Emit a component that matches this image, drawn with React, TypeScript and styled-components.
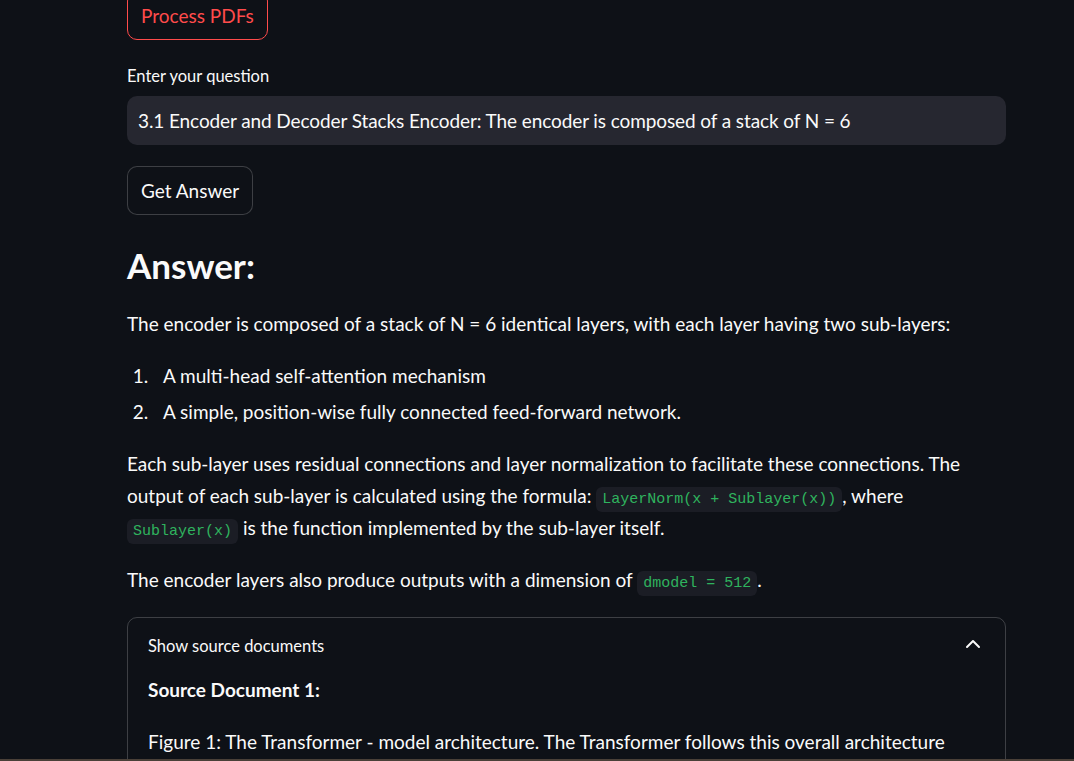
import styled, { createGlobalStyle } from 'styled-components';

const GlobalStyle = createGlobalStyle`
  html, body {
    margin: 0;
    padding: 0;
    background: #0e1117;
    overflow: hidden;
  }
  body {
    font-family: Lato, "Noto Sans", sans-serif;
    color: #fafafa;
  }
`;

const Page = styled.div`
  width: 100vw;
  height: 100vh;
  background: #0e1117;
  overflow: hidden;
`;

const Main = styled.div`
  width: 879px;
  margin-left: 127px;
  margin-top: -9px;
  display: flex;
  flex-direction: column;
`;

const Button = styled.button<{ $active?: boolean; $top?: number }>`
  align-self: flex-start;
  height: 49px;
  margin-top: ${(p) => p.$top ?? 0}px;
  padding: 0 13px;
  border-radius: 10px;
  background: #0e1117;
  font-family: inherit;
  font-size: 19px;
  border: 1px solid ${(p) => (p.$active ? 'rgb(255, 75, 75)' : 'rgba(250, 250, 250, 0.2)')};
  color: ${(p) => (p.$active ? 'rgb(255, 75, 75)' : '#fafafa')};
`;

const Label = styled.label`
  margin-top: 22px;
  height: 28px;
  display: flex;
  align-items: center;
  font-size: 16.5px;
  margin-bottom: 6px;
`;

const Input = styled.div`
  height: 49px;
  box-sizing: border-box;
  border-radius: 10px;
  background: #262730;
  display: flex;
  align-items: center;
  padding: 0 11px;
  font-size: 19px;
  letter-spacing: -0.1px;
  white-space: nowrap;
`;

const Heading = styled.h3`
  margin: 29px 0 0;
  font-size: 35px;
  font-weight: 700;
  line-height: 42px;
`;

const Para = styled.p<{ $top?: number }>`
  margin: ${(p) => p.$top ?? 20}px 0 0;
  font-size: 19px;
  line-height: 32px;
`;

const List = styled.ol`
  margin: 20px 0 0;
  padding-left: 26px;
  font-size: 19px;
  line-height: 32px;
  display: flex;
  flex-direction: column;
  gap: 4px;
  li {
    padding-left: 10px;
  }
`;

const Code = styled.code`
  font-family: "Liberation Mono", "DejaVu Sans Mono", monospace;
  font-size: 15px;
  line-height: 1;
  color: #2fb35e;
  background: #1b1d25;
  border-radius: 6px;
  padding: 4px 6px;
`;

const Expander = styled.div`
  margin-top: 21px;
  border: 1px solid rgba(250, 250, 250, 0.2);
  border-radius: 10px;
  height: 200px;
  padding: 0 20px;
`;

const ExpanderHeader = styled.div`
  height: 56px;
  display: flex;
  align-items: center;
  justify-content: space-between;
  font-size: 16.5px;
`;

const Chevron = styled.svg`
  width: 16px;
  height: 16px;
  margin-right: 4px;
  margin-top: -4px;
`;

const Strong = styled.div`
  font-size: 19px;
  line-height: 32px;
  font-weight: 700;
`;

const BottomLine = styled.div`
  position: fixed;
  left: 0;
  right: 0;
  bottom: 0;
  height: 2px;
  background: #4a4038;
`;

export default function App() {
  return (
    <Page>
      <GlobalStyle />
      <Main>
        <Button $active>Process PDFs</Button>
        <Label>Enter your question</Label>
        <Input>3.1 Encoder and Decoder Stacks Encoder: The encoder is composed of a stack of N = 6</Input>
        <Button $top={21}>Get Answer</Button>
        <Heading>Answer:</Heading>
        <Para $top={22}>The encoder is composed of a stack of N = 6 identical layers, with each layer having two sub-layers:</Para>
        <List>
          <li>A multi-head self-attention mechanism</li>
          <li>A simple, position-wise fully connected feed-forward network.</li>
        </List>
        <Para>
          Each sub-layer uses residual connections and layer normalization to facilitate these connections. The
          output of each sub-layer is calculated using the formula: <Code>LayerNorm(x + Sublayer(x))</Code>, where{' '}
          <Code>Sublayer(x)</Code> is the function implemented by the sub-layer itself.
        </Para>
        <Para>
          The encoder layers also produce outputs with a dimension of <Code>dmodel = 512</Code>.
        </Para>
        <Expander>
          <ExpanderHeader>
            <span>Show source documents</span>
            <Chevron viewBox="0 0 16 16" fill="none" stroke="#fafafa" strokeWidth="2" strokeLinecap="round" strokeLinejoin="round">
              <path d="M2 11 L8 5 L14 11" />
            </Chevron>
          </ExpanderHeader>
          <Strong>Source Document 1:</Strong>
          <Para>Figure 1: The Transformer - model architecture. The Transformer follows this overall architecture</Para>
        </Expander>
      </Main>
      <BottomLine />
    </Page>
  );
}
